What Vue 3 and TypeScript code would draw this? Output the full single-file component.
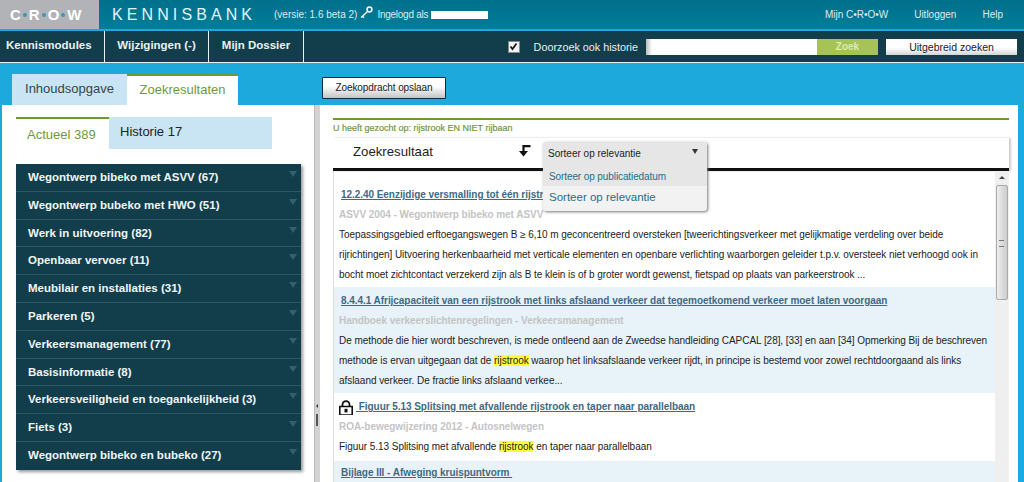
<script setup lang="ts">
const cats: string[] = [
  'Wegontwerp bibeko met ASVV (67)', 'Wegontwerp bubeko met HWO (51)', 'Werk in uitvoering (82)',
  'Openbaar vervoer (11)', 'Meubilair en installaties (31)', 'Parkeren (5)', 'Verkeersmanagement (77)',
  'Basisinformatie (8)', 'Verkeersveiligheid en toegankelijkheid (3)', 'Fiets (3)', 'Wegontwerp bibeko en bubeko (27)',
]
</script>

<template>
  <div class="page">
    <header class="top">
      <div class="logo">C<i></i>R<i></i>O<i></i>W</div>
      <div class="brand">KENNISBANK</div>
      <div class="version">(versie: 1.6 beta 2)</div>
      <svg class="key" width="13" height="13" viewBox="0 0 13 13"><circle cx="9.5" cy="3.5" r="2.4" fill="none" stroke="#fff" stroke-width="1.5"/><path d="M7.8 5.2 1.2 11.5M2.5 10.2l1.5 1.5" fill="none" stroke="#fff" stroke-width="1.4"/></svg>
      <div class="login">Ingelogd als</div>
      <div class="redact"></div>
      <nav class="toplinks"><span>Mijn C•R•O•W</span><span>Uitloggen</span><span>Help</span></nav>
    </header>
    <div class="nav">
      <div class="navitem n1">Kennismodules</div>
      <div class="navitem n2">Wijzigingen (-)</div>
      <div class="navitem n3">Mijn Dossier</div>
      <div class="search">
        <span class="check"><svg width="9" height="9" viewBox="0 0 9 9"><path d="M1.5 4.5 3.5 7 7.5 1.5" fill="none" stroke="#111" stroke-width="1.7"/></svg></span>
        <span class="hist">Doorzoek ook historie</span>
        <span class="input"></span>
        <span class="zoek">Zoek</span>
        <span class="adv">Uitgebreid zoeken</span>
      </div>
    </div>
    <div class="tabbar">
      <div class="tab inactive">Inhoudsopgave</div>
      <div class="tab active">Zoekresultaten</div>
      <div class="save">Zoekopdracht opslaan</div>
    </div>
    <main class="content">
      <aside class="left">
        <div class="subtabs">
          <div class="sub on">Actueel 389</div>
          <div class="sub off">Historie 17</div>
        </div>
        <ul class="cats">
          <li v-for="c in cats" :key="c"><span>{{ c }}</span><b class="tri"></b></li>
        </ul>
      </aside>
      <div class="split"><b class="dot"></b><b class="grip"></b></div>
      <section class="right">
        <div class="query">U heeft gezocht op: rijstrook EN NIET rijbaan</div>
        <div class="reshead">
          <span class="restitle">Zoekresultaat</span>
          <svg class="sorticon" width="13" height="13" viewBox="0 0 13 13"><path d="M12.5 2.2H5.5V8" fill="none" stroke="#111" stroke-width="2.2"/><path d="M1 7h9l-4.5 5.5z" fill="#111"/></svg>
          <div class="drop">
            <div class="drophead"><span>Sorteer op relevantie</span><b class="droptri"></b></div>
            <div class="opt o1">Sorteer op publicatiedatum</div>
            <div class="opt o2">Sorteer op relevantie</div>
          </div>
        </div>
        <div class="results">
          <div class="list">
            <article class="res r1">
              <a>12.2.40 Eenzijdige versmalling tot één rijstrook</a>
              <h4>ASVV 2004 - Wegontwerp bibeko met ASVV</h4>
              <p>Toepassingsgebied erftoegangswegen B ≥ 6,10 m geconcentreerd oversteken [tweerichtingsverkeer met gelijkmatige verdeling over beide<br>rijrichtingen] Uitvoering herkenbaarheid met verticale elementen en openbare verlichting waarborgen geleider t.p.v. oversteek niet verhoogd ook in<br>bocht moet zichtcontact verzekerd zijn als B te klein is of b groter wordt gewenst, fietspad op plaats van parkeerstrook ...</p>
            </article>
            <article class="res r2 alt">
              <a>8.4.4.1 Afrijcapaciteit van een rijstrook met links afslaand verkeer dat tegemoetkomend verkeer moet laten voorgaan</a>
              <h4>Handboek verkeerslichtenregelingen - Verkeersmanagement</h4>
              <p>De methode die hier wordt beschreven, is mede ontleend aan de Zweedse handleiding CAPCAL [28], [33] en aan [34] Opmerking Bij de beschreven<br>methode is ervan uitgegaan dat de <mark>rijstrook</mark> waarop het linksafslaande verkeer rijdt, in principe is bestemd voor zowel rechtdoorgaand als links<br>afslaand verkeer. De fractie links afslaand verkee...</p>
            </article>
            <article class="res r3">
              <div class="locked">
                <svg width="14" height="15" viewBox="0 0 14 15"><path d="M3.5 7V4.6a3.5 3.5 0 0 1 7 0V7" fill="none" stroke="#111" stroke-width="1.8"/><path d="M.8 6.5h12.4V15H.8z" fill="#fff" stroke="#111" stroke-width="1.6"/><rect x="5.5" y="8.8" width="3" height="3.6" fill="#111"/></svg>
                <a>&nbsp;Figuur 5.13 Splitsing met afvallende rijstrook en taper naar parallelbaan</a>
              </div>
              <h4>ROA-bewegwijzering 2012 - Autosnelwegen</h4>
              <p>Figuur 5.13 Splitsing met afvallende <mark>rijstrook</mark> en taper naar parallelbaan</p>
            </article>
            <article class="res r4 alt">
              <a>Bijlage III - Afweging kruispuntvorm&nbsp;</a>
            </article>
          </div>
          <div class="scroll">
            <b class="up"></b>
            <div class="thumb"><i></i></div>
          </div>
        </div>
      </section>
    </main>
  </div>
</template>

<style scoped>
.page { width: 1024px; height: 482px; overflow: hidden; background: #1ea9dd; font-family: "Liberation Sans", Arial, sans-serif; color: #222; display: flex; flex-direction: column; }
.top { height: 29px; background: linear-gradient(#00708c, #007d98); color: #d8eef3; display: flex; align-items: center; flex: none; }
.logo { width: 99px; height: 29px; background: #b1b3b6; color: #fff; font-size: 15px; font-weight: 700; padding-left: 10px; box-sizing: border-box; display: flex; align-items: center; gap: 2px; }
.logo i { width: 4px; height: 4px; border-radius: 50%; background: #3f97b0; }
.brand { margin-left: 13px; font-size: 16px; letter-spacing: 4.1px; color: #e4f4f7; width: 162px; }
.version, .login { font-size: 10px; color: #d8eef3; }
.key { margin: -4px 0 0 3px; }
.login { margin-left: 4px; letter-spacing: -0.25px; }
.redact { width: 57px; height: 8px; background: #fff; margin-left: 3px; }
.toplinks { margin-left: auto; display: flex; gap: 26px; padding-right: 21px; font-size: 10px; }
.nav { height: 31px; margin-top: 2px; background: #123e4c; border-bottom: 1px solid #e8f2f4; display: flex; align-items: stretch; flex: none; box-sizing: content-box; }
.navitem { color: #e9f1f3; font-size: 11.5px; font-weight: 700; line-height: 29px; border-right: 1px solid #e8f2f4; box-sizing: border-box; text-align: center; }
.n1 { width: 105px; text-align: left; padding-left: 6px; } .n2 { width: 104px; } .n3 { width: 95px; }
.search { margin-left: auto; display: flex; align-items: center; padding-right: 7px; }
.check { width: 10px; height: 10px; background: #f2f2f2; border: 1px solid #888; display: flex; align-items: center; justify-content: center; margin-right: 14px; }
.hist { color: #e6eff1; font-size: 10.8px; margin-right: 8px; }
.input { width: 171px; height: 16px; background: linear-gradient(90deg, #bbb, #fff 6px); }
.zoek { width: 61px; height: 16px; background: #a5c455; color: #dcebb4; font-size: 10px; font-weight: 700; text-align: center; line-height: 16px; margin-right: 8px; }
.adv { width: 131px; height: 16px; background: linear-gradient(#fff 55%, #d4d4d4); color: #222; font-size: 10.5px; text-align: center; line-height: 16px; }
.tabbar { height: 42px; display: flex; align-items: flex-end; padding-left: 12px; flex: none; box-sizing: border-box; position: relative; }
.tab { height: 31px; font-size: 13px; line-height: 29px; box-sizing: border-box; text-align: center; }
.inactive { width: 115px; background: #c9e5f3; color: #33444d; }
.active { width: 111px; background: #fff; color: #72983a; border-top: 2px solid #6b9a2e; line-height: 27px; }
.save { margin: 0 0 6px 84px; width: 124px; height: 22px; box-sizing: border-box; border: 1px solid #0d2c38; border-radius: 1px; background: linear-gradient(#fff 40%, #c4c4c4); color: #222; font-size: 10px; letter-spacing: -0.1px; text-align: center; line-height: 20px; }
.content { flex: 1; display: flex; padding: 0 6px 0 2px; min-height: 0; }
.left { width: 312px; background: #fff; padding: 12px 0 0 14px; box-sizing: border-box; flex: none; }
.subtabs { display: flex; height: 32px; }
.sub { font-size: 13px; height: 32px; box-sizing: border-box; }
.on { width: 93px; border-top: 2px solid #6b9a2e; color: #72983a; padding: 8px 0 0 11px; }
.off { width: 163px; background: #c9e5f3; color: #222; padding: 7px 0 0 11px; }
.cats { list-style: none; margin: 15px 0 0; padding: 0; width: 285px; box-shadow: 2px 2px 3px #999; }
.cats li { height: 27.8px; box-sizing: border-box; background: #123e4c; border-bottom: 1px solid #2c5764; color: #f0f5f6; font-size: 11.5px; font-weight: 700; line-height: 26px; padding-left: 12px; position: relative; }
.cats li:last-child { border-bottom: 0; }
.tri { position: absolute; right: 4px; top: 7px; border: 4px solid transparent; border-top: 6px solid #33606e; border-bottom: 0; }
.split { width: 6px; flex: none; background: #d3d3d3; border-left: 1px solid #bbb; box-sizing: border-box; position: relative; }
.dot { position: absolute; left: 1px; top: 299px; border: 2px solid transparent; border-right: 2px solid #333; border-left: 0; }
.grip { position: absolute; left: 1px; top: 309px; width: 2px; height: 12px; background: #555; }
.right { flex: 1; background: #fff; padding: 13px 9px 0 13px; min-width: 0; display: flex; flex-direction: column; box-sizing: border-box; }
.query { border-top: 2px solid #6b9a2e; color: #72983a; font-size: 9px; height: 20px; line-height: 14px; padding-top: 1px; box-sizing: border-box; -webkit-text-stroke: 0.2px #72983a; }
.reshead { height: 30px; border-bottom: 3px solid #111; box-sizing: content-box; display: flex; align-items: center; position: relative; flex: none; box-shadow: 2px 0 2px #ccc; }
.restitle { margin-left: 20px; font-size: 13.2px; color: #222; width: 165px; margin-top: -3px; }
.sorticon { margin-top: -5px; }
.drop { position: absolute; left: 210px; top: 4px; width: 164px; height: 69px; border-radius: 3px; box-shadow: 1px 1px 3px #777; background: #f2f2f2; z-index: 3; overflow: hidden; }
.drophead { height: 25px; background: #e6e6e6; font-size: 10px; color: #222; line-height: 23px; padding-left: 5px; position: relative; }
.droptri { position: absolute; right: 9px; top: 7px; border: 3px solid transparent; border-top: 5px solid #333; border-bottom: 0; }
.opt { color: #206f8c; padding-left: 6px; }
.o1 { height: 19px; background: #e6e6e6; font-size: 10px; letter-spacing: -0.1px; line-height: 19px; }
.o2 { height: 25px; font-size: 11.5px; line-height: 23px; }
.results { flex: 1; min-height: 0; display: flex; overflow: hidden; border-left: 1px solid #ddd; }
.list { flex: 1; min-width: 0; }
.res { padding: 0 0 0 5px; box-sizing: border-box; overflow: hidden; }
.alt { background: #e8f3f9; }
.r1 { height: 116px; padding-top: 17px; }
.r2 { height: 106px; padding-top: 7px; }
.r3 { height: 68px; padding-top: 7px; }
.r4 { height: 30px; padding-top: 5px; }
.res a { display: block; font-size: 10px; letter-spacing: -0.05px; font-weight: 700; color: #3e6a85; text-decoration: underline; line-height: 14px; padding-left: 2px; white-space: nowrap; }
.locked a { padding-left: 0; }
.res h4 { margin: 6px 0 0; font-size: 10px; letter-spacing: -0.05px; font-weight: 700; color: #c4c4c4; line-height: 14px; }
.res p { margin: 3px 0 0; font-size: 10px; letter-spacing: -0.05px; line-height: 20px; color: #222; white-space: nowrap; }
mark { background: #ffff33; color: #222; }
.locked { display: flex; align-items: flex-end; gap: 3px; height: 14px; }
.locked svg { flex: none; margin-bottom: -1px; }
.scroll { width: 14px; flex: none; background: #efefef; position: relative; }
.up { position: absolute; left: 4px; top: 5px; border: 3px solid transparent; border-bottom: 3px solid #444; border-top: 0; }
.thumb { position: absolute; left: 1px; top: 14px; width: 12px; height: 115px; border: 1px solid #aaa; border-radius: 2px; background: linear-gradient(90deg, #eee, #ccc); box-sizing: border-box; }
.thumb i { position: absolute; left: 2px; top: 54px; width: 5px; height: 5px; border-top: 1px solid #777; border-bottom: 1px solid #777; }
</style>
